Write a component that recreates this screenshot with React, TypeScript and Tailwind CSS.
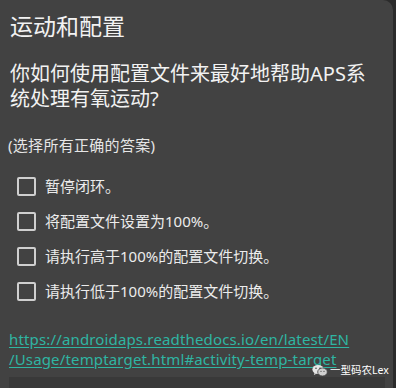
import React from 'react';

const options = [
  '暂停闭环。',
  '将配置文件设置为100%。',
  '请执行高于100%的配置文件切换。',
  '请执行低于100%的配置文件切换。',
];

const font = { fontFamily: '"Noto Sans", "Noto Sans CJK SC", sans-serif' };

const WeChatIcon = () => (
  <svg width="16" height="13" viewBox="0 0 16 13">
    <ellipse cx="6" cy="5.5" rx="5.6" ry="4.6" fill="#e6e6e6" />
    <path d="M2.5 9 L1.8 11 L4.5 9.8 Z" fill="#e6e6e6" />
    <ellipse cx="10.5" cy="8" rx="4.8" ry="4" fill="#d0d0d0" stroke="#424242" strokeWidth="0.8" />
    <circle cx="4" cy="4.3" r="0.8" fill="#424242" />
    <circle cx="8" cy="4.3" r="0.8" fill="#424242" />
    <circle cx="9" cy="7.3" r="0.6" fill="#424242" />
    <circle cx="12" cy="7.3" r="0.6" fill="#424242" />
  </svg>
);

export default function App() {
  return (
    <div className="w-[396px] h-[388px] bg-[#2b2b2b] overflow-hidden" style={font}>
      <div className="relative w-[393px] h-[388px] bg-[#424242] rounded-tr-[10px] flex flex-col">
        <h1 className="mt-[12px] ml-[10px] text-[23px] leading-[28px] text-[#f2f2f2]">运动和配置</h1>
        <p className="mt-[21px] ml-[10px] text-[20px] leading-[25px] text-[#f2f2f2]">
          你如何使用配置文件来最好地帮助APS系
          <br />
          统处理有氧运动?
        </p>
        <p className="mt-[24px] ml-[8px] text-[15px] leading-[20px] text-[#e6e6e6] tracking-[0.3px]">
          (选择所有正确的答案)
        </p>
        <div className="mt-[14px] flex flex-col">
          {options.map((o) => (
            <label key={o} className="h-[35px] flex items-center pl-[17px] gap-[9px]">
              <span className="w-[19px] h-[19px] border-2 border-[#cfcfcf] rounded-[2px]" />
              <span className="text-[15px] text-[#ececec]">{o}</span>
            </label>
          ))}
        </div>
        <a
          href="#"
          className="mt-[20px] ml-[9px] text-[15px] leading-[20px] tracking-[0.15px] text-[#2fb5a2] underline underline-offset-2 whitespace-nowrap"
        >
          https://androidaps.readthedocs.io/en/latest/EN
          <br />
          /Usage/temptarget.html#activity-temp-target
        </a>
        <div className="mt-[8px] ml-[9px] mr-[8px] flex-1 bg-[#393939]" />
        <div className="absolute left-[312px] top-[363px] flex items-center gap-[2px] whitespace-nowrap">
          <WeChatIcon />
          <span className="text-[10.5px] leading-[14px] text-white">一型码农Lex</span>
        </div>
      </div>
    </div>
  );
}
